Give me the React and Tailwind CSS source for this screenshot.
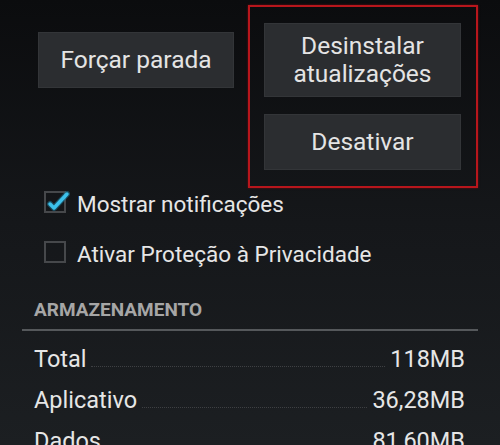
import React from 'react';

const rows = [
  { label: 'Total', value: '118MB' },
  { label: 'Aplicativo', value: '36,28MB' },
  { label: 'Dados', value: '81,60MB' },
];

function Checkbox({ checked }) {
  return (
    <div className="relative w-[22px] h-[22px] border-2 border-[#46484b] shrink-0">
      {checked && (
        <svg className="absolute -left-[2px] -top-[2px]" width="26" height="26" viewBox="0 0 26 26">
          <path d="M6 13 L10 17 L23 3" fill="none" stroke="#1d6f8c" strokeWidth="6" strokeLinecap="round" strokeLinejoin="round" opacity="0.6" />
          <path d="M6 13 L10 17 L23 3" fill="none" stroke="#3cc0ea" strokeWidth="3.5" strokeLinecap="round" strokeLinejoin="round" />
        </svg>
      )}
    </div>
  );
}

export default function App() {
  return (
    <div className="w-[500px] h-[445px] overflow-hidden bg-gradient-to-b from-[#0b0c0e] via-[#15171a] to-[#1c1f22] text-[#e6e6e6] font-['Roboto',sans-serif]">
      {/* botões do topo */}
      <div className="flex pl-[38px] pt-[5px]">
        <div className="pt-[27px]">
          <button className="w-[196px] h-[56px] bg-[#2b2d30] border border-[#333538] text-[24.5px] leading-[28px] text-[#e4e4e4]">
            Forçar parada
          </button>
        </div>
        <div className="ml-[14px] w-[230px] h-[183px] border-2 border-[#b8161c] shadow-[0_0_2px_#6e0c10] px-[14px] pt-[16px] flex flex-col gap-[17px]">
          <button className="w-[197px] h-[74px] bg-[#2b2d30] border border-[#333538] text-[24.5px] leading-[28px] text-[#e4e4e4]">
            Desinstalar<br />atualizações
          </button>
          <button className="w-[197px] h-[56px] bg-[#2b2d30] border border-[#333538] text-[24.5px] leading-[28px] text-[#e4e4e4]">
            Desativar
          </button>
        </div>
      </div>

      {/* opções */}
      <div className="pl-[44px] mt-[3px] flex items-center gap-[11px] h-[22px]">
        <Checkbox checked />
        <span className="text-[22.5px] leading-[22px] pt-[3px]">Mostrar notificações</span>
      </div>
      <div className="pl-[44px] mt-[28px] flex items-center gap-[11px] h-[22px]">
        <Checkbox />
        <span className="text-[22.5px] leading-[22px] pt-[3px]">Ativar Proteção à Privacidade</span>
      </div>

      {/* armazenamento */}
      <div className="pl-[34px] mt-[38px] text-[19px] leading-[18px] font-bold text-[#a6a6a6]">ARMAZENAMENTO</div>
      <div className="mx-[22px] mt-[10px] h-[2px] bg-[#55585b]" />

      <div className="mt-[8px] pl-[34px] pr-[35px]">
        {rows.map((r) => (
          <div key={r.label} className="flex items-baseline text-[23.5px] leading-[41px]">
            <span>{r.label}</span>
            <div className="flex-1 h-0 mx-[5px] border-b border-dotted border-[#3e4043]" />
            <span>{r.value}</span>
          </div>
        ))}
      </div>
    </div>
  );
}
